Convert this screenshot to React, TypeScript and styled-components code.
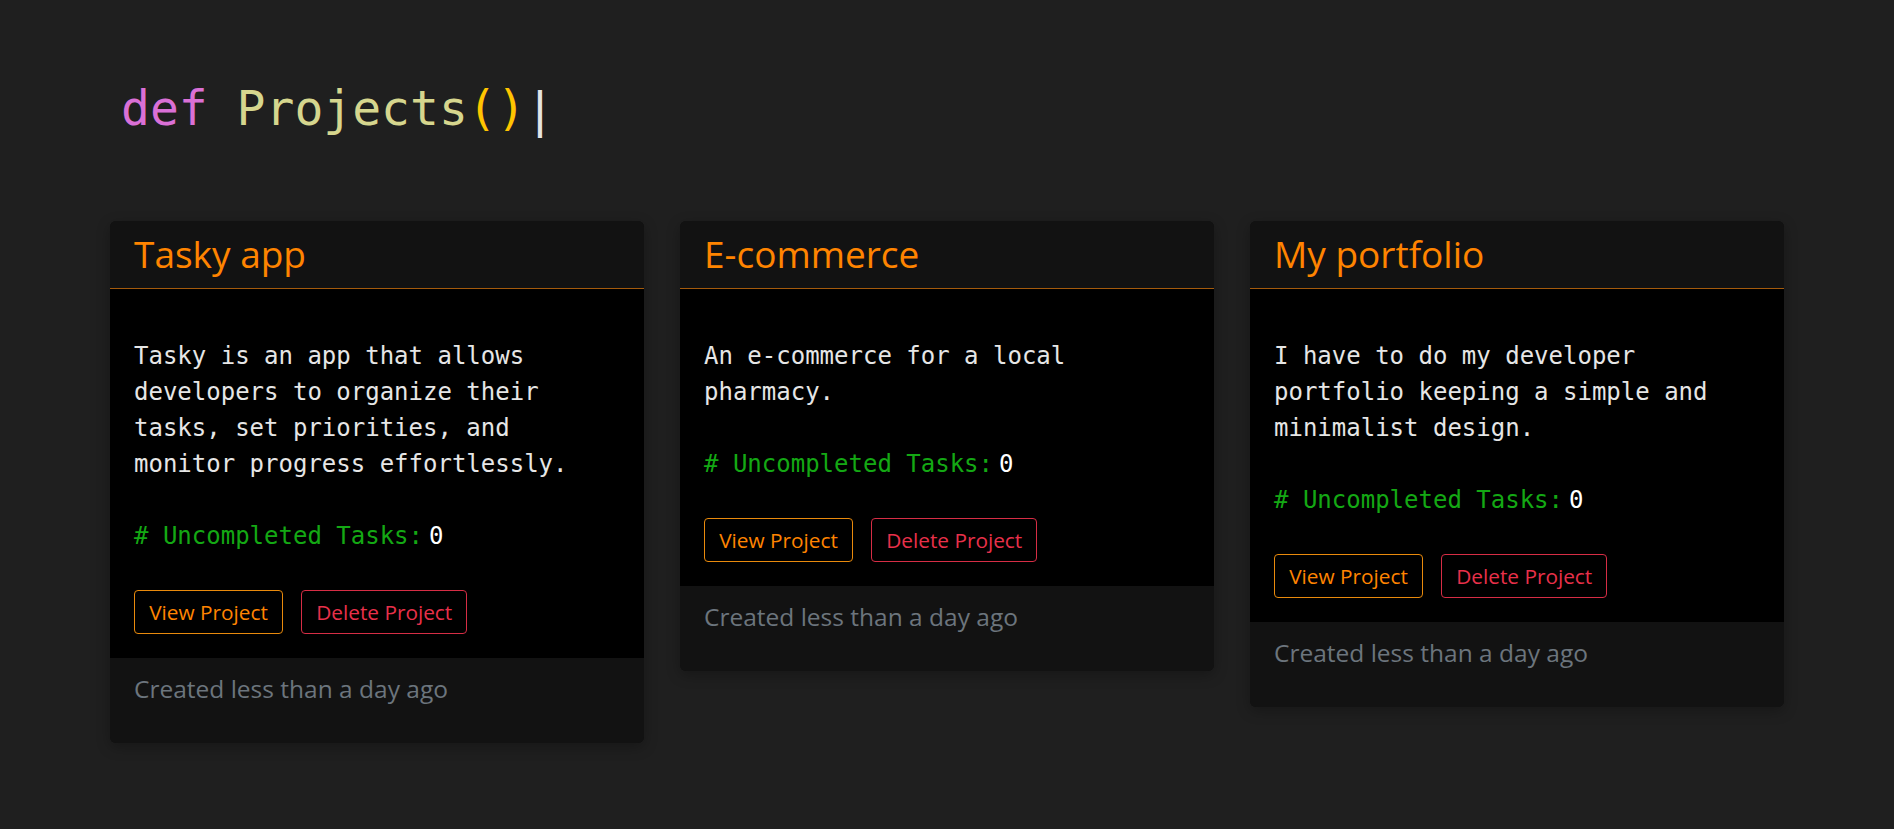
import React from "react";
import styled, { createGlobalStyle } from "styled-components";

const GlobalStyle = createGlobalStyle`
  * { box-sizing: border-box; }
  html, body { margin: 0; padding: 0; background: #1f1f1f; }
  body { font-family: "Open Sans", "Noto Sans", sans-serif; }
`;

const Main = styled.main`
  padding: 80px 110px;
  min-height: 829px;
`;

const Heading = styled.h1`
  margin: 0 0 83px 11px;
  font-family: "DejaVu Sans Mono", "Liberation Mono", monospace;
  font-size: 48px;
  line-height: 57.6px;
  font-weight: 400;
  white-space: pre;
`;

const Token = styled.span<{ $color: string }>`
  color: ${(p) => p.$color};
`;

const Caret = styled.span`
  color: #e4e4e4;
  display: inline-block;
  transform: translateY(2px);
`;

const Grid = styled.section`
  display: grid;
  grid-template-columns: repeat(3, 1fr);
  column-gap: 36px;
  align-items: start;
`;

const Card = styled.article`
  border-radius: 6px;
  overflow: hidden;
  background: #121212;
  box-shadow: 0 4px 14px rgba(0, 0, 0, 0.28);
`;

const CardHeader = styled.header`
  padding: 11.4px 24px;
  background: #121212;
  border-bottom: 1px solid #a35a0c;
`;

const CardTitle = styled.h2`
  margin: 0;
  font-family: "Open Sans", "Noto Sans", sans-serif;
  font-size: 37px;
  line-height: 1.2;
  font-weight: 400;
  color: #ff8400;
`;

const CardBody = styled.div`
  background: #000;
  padding: 49px 24px 24px;
`;

const Description = styled.p`
  margin: 0 0 36px;
  font-family: "DejaVu Sans Mono", "Liberation Mono", monospace;
  font-size: 24px;
  line-height: 36px;
  color: #e6e6e6;
`;

const Tasks = styled.p`
  margin: 0 0 36px;
  font-family: "DejaVu Sans Mono", "Liberation Mono", monospace;
  font-size: 24px;
  line-height: 36px;
  color: #14a814;
`;

const Count = styled.span`
  color: #ffffff;
  margin-left: 6px;
`;

const Actions = styled.div`
  display: flex;
  gap: 18px;
`;

const Button = styled.button<{ $tone: "view" | "delete" }>`
  font-family: "Open Sans", "Noto Sans", sans-serif;
  font-size: 20.8px;
  line-height: 28px;
  padding: 7.2px 14.2px;
  background: transparent;
  border-radius: 4px;
  cursor: pointer;
  color: ${(p) => (p.$tone === "view" ? "#ff8400" : "#e8304a")};
  border: 1px solid ${(p) => (p.$tone === "view" ? "#e98a0c" : "#d62d45")};
`;

const CardFooter = styled.footer`
  padding: 14px 24px 37px;
  background: #121212;
  font-family: "Open Sans", "Noto Sans", sans-serif;
  font-size: 24.5px;
  line-height: 1.362;
  color: #6c757d;
`;

const projects = [
  {
    title: "Tasky app",
    description:
      "Tasky is an app that allows developers to organize their tasks, set priorities, and monitor progress effortlessly.",
  },
  {
    title: "E-commerce",
    description: "An e-commerce for a local pharmacy.",
  },
  {
    title: "My portfolio",
    description:
      "I have to do my developer portfolio keeping a simple and minimalist design.",
  },
];

export default function App() {
  return (
    <>
      <GlobalStyle />
      <Main>
        <Heading>
          <Token $color="#da70d6">def</Token> <Token $color="#d6d68e">Projects</Token>
          <Token $color="#ffc400">()</Token>
          <Caret>|</Caret>
        </Heading>
        <Grid>
          {projects.map((p) => (
            <Card key={p.title}>
              <CardHeader>
                <CardTitle>{p.title}</CardTitle>
              </CardHeader>
              <CardBody>
                <Description>{p.description}</Description>
                <Tasks>
                  # Uncompleted Tasks:<Count>0</Count>
                </Tasks>
                <Actions>
                  <Button $tone="view">View Project</Button>
                  <Button $tone="delete">Delete Project</Button>
                </Actions>
              </CardBody>
              <CardFooter>Created less than a day ago</CardFooter>
            </Card>
          ))}
        </Grid>
      </Main>
    </>
  );
}
